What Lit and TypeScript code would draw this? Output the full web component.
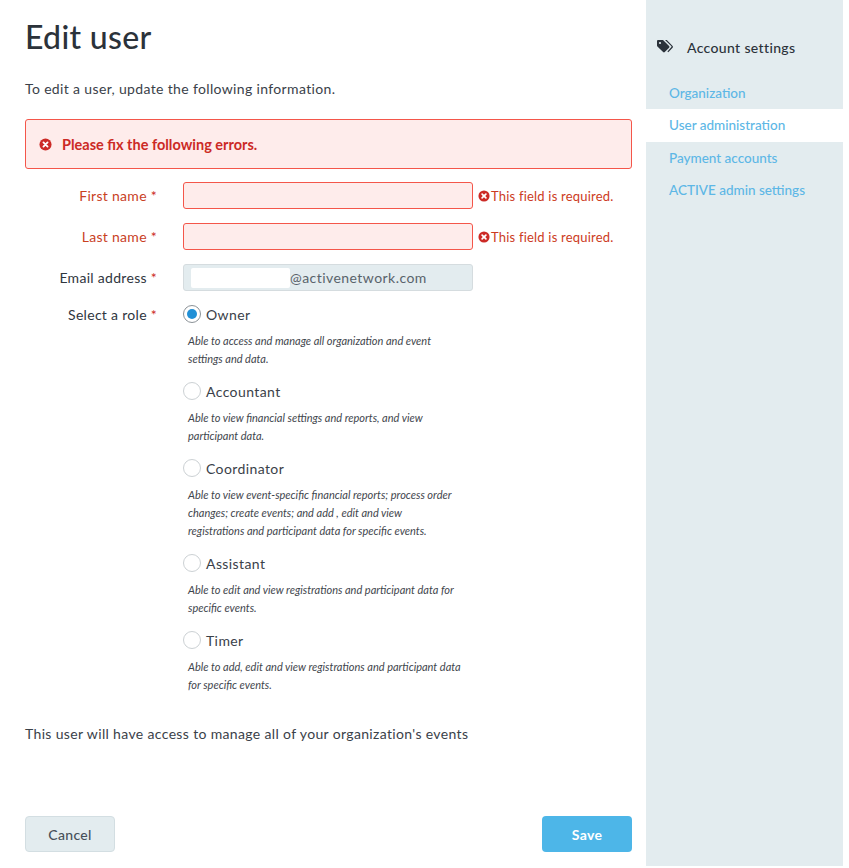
import { LitElement, html, css, svg } from "lit";
import { customElement } from "lit/decorators.js";

const errIcon = html`<svg class="err" viewBox="0 0 14 14"><circle cx="7" cy="7" r="6.5" fill="#cc2a26"/><path d="M4.8 4.8l4.4 4.4M9.2 4.8l-4.4 4.4" stroke="#fff" stroke-width="2" stroke-linecap="round"/></svg>`;

const roles = [
  { name: "Owner", checked: true, lines: ["Able to access and manage all organization and event", "settings and data."] },
  { name: "Accountant", lines: ["Able to view financial settings and reports, and view", "participant data."] },
  { name: "Coordinator", lines: ["Able to view event-specific financial reports; process order", "changes; create events; and add , edit and view", "registrations and participant data for specific events."] },
  { name: "Assistant", lines: ["Able to edit and view registrations and participant data for", "specific events."] },
  { name: "Timer", lines: ["Able to add, edit and view registrations and participant data", "for specific events."] },
];

@customElement("app-root")
export class AppRoot extends LitElement {
  static styles = css`
    :host { display: block; width: 849px; height: 868px; background: #fff; font-family: Lato, "Open Sans", sans-serif; color: #3a4149; font-size: 14px; }
    * { box-sizing: border-box; }
    .page { display: flex; height: 866px; width: 843px; }
    .main { width: 646px; padding: 0 14px 0 25px; display: flex; flex-direction: column; }
    h1 { margin: 17px 0 0; font-size: 32px; line-height: 40px; font-weight: 500; color: #2b323a; letter-spacing: 0.3px; }
    .intro { margin: 22px 0 0; line-height: 20px; letter-spacing: 0.35px; }
    .alert { margin-top: 20px; height: 50px; display: flex; align-items: center; gap: 10px; padding-left: 13px; background: #feeceb; border: 1px solid #f4564a; border-radius: 3px; color: #cc2a26; font-weight: 700; font-size: 14.5px; }
    .alert .err { width: 13px; height: 13px; }
    .row { display: flex; }
    .row.f { margin-top: 13px; height: 27px; align-items: center; }
    .row.f + .row.f { margin-top: 14px; }
    .lab { width: 132px; text-align: right; margin-right: 26px; letter-spacing: 0.3px; color: #2f363e; }
    .lab i { font-style: normal; color: #cc2a26; }
    .bad .lab { color: #c9411f; }
    .box { width: 290px; height: 27px; border: 1px solid #f4564a; border-radius: 3px; background: #feeceb; }
    .msg { display: flex; align-items: center; margin-left: 5px; gap: 1px; color: #cc3b22; font-size: 13px; letter-spacing: 0.2px; }
    .msg .err { width: 12px; height: 12px; }
    .box.email { background: #e3ecef; border-color: #d5dcdf; display: flex; align-items: center; color: #59636b; letter-spacing: 0.45px; padding-left: 7px; }
    .mask { width: 99px; height: 20px; background: #fff; border-radius: 2px; flex: none; }
    .rolerow { margin-top: 14px; }
    .rolerow .lab { line-height: 18px; padding-top: 1px; }
    .list { width: 290px; display: flex; flex-direction: column; }
    .opt { display: flex; align-items: center; height: 18px; gap: 5px; letter-spacing: 0.4px; }
    .radio { width: 18px; height: 18px; border-radius: 50%; border: 1px solid #ccd1d4; background: #fff; flex: none; display: flex; align-items: center; justify-content: center; }
    .radio.on { border-color: #8b9297; }
    .radio.on span { width: 10px; height: 10px; border-radius: 50%; background: #2190d6; }
    .desc { margin: 9px 0 14px 5px; font-size: 11px; line-height: 18px; font-style: italic; color: #3f464d; white-space: nowrap; }
    .note { margin: 16px 0 0; line-height: 20px; letter-spacing: 0.35px; }
    .actions { margin-top: auto; margin-bottom: 14px; display: flex; justify-content: space-between; }
    .btn { width: 90px; height: 36px; border-radius: 4px; display: flex; align-items: center; justify-content: center; font-size: 14px; font-weight: 500; letter-spacing: 0.3px; }
    .cancel { background: #e3ecef; border: 1px solid #d3dee2; color: #47505a; }
    .save { background: #4db6e8; color: #fff; font-weight: 700; }
    .side { width: 197px; background: #e3ecef; padding-top: 37px; }
    .head { display: flex; align-items: center; height: 20px; padding-left: 11px; gap: 14px; color: #2b323a; letter-spacing: 0.35px; font-weight: 500; }
    .head svg { width: 16px; height: 14px; }
    nav { margin-top: 20px; display: flex; flex-direction: column; }
    nav a { height: 32.3px; line-height: 32px; padding-left: 23px; color: #5db7e6; font-size: 13.5px; font-weight: 500; }
    nav a.cur { background: #fff; }
  `;

  render() {
    return html`<div class="page">
      <div class="main">
        <h1>Edit user</h1>
        <p class="intro">To edit a user, update the following information.</p>
        <div class="alert">${errIcon}<span>Please fix the following errors.</span></div>
        <div class="row f bad"><div class="lab">First name <i>*</i></div><div class="box"></div><div class="msg">${errIcon}<span>This field is required.</span></div></div>
        <div class="row f bad"><div class="lab">Last name <i>*</i></div><div class="box"></div><div class="msg">${errIcon}<span>This field is required.</span></div></div>
        <div class="row f"><div class="lab">Email address <i>*</i></div><div class="box email"><span class="mask"></span><span>@activenetwork.com</span></div></div>
        <div class="row rolerow"><div class="lab">Select a role <i>*</i></div>
          <div class="list">
            ${roles.map((r) => html`<div class="opt"><span class="radio ${r.checked ? "on" : ""}">${r.checked ? html`<span></span>` : ""}</span>${r.name}</div>
              <div class="desc">${r.lines.map((l) => html`<div>${l}</div>`)}</div>`)}
          </div>
        </div>
        <p class="note">This user will have access to manage all of your organization's events</p>
        <div class="actions"><div class="btn cancel">Cancel</div><div class="btn save">Save</div></div>
      </div>
      <aside class="side">
        <div class="head"><svg viewBox="0 0 16 14"><path d="M0 1.2C0 .5.5 0 1.2 0h4.3c.4 0 .8.2 1 .4l5.6 5.6c.5.5.5 1.2 0 1.7l-4.3 4.3c-.5.5-1.2.5-1.7 0L.4 6.4C.2 6.2 0 5.800 0 5.500z" fill="#2b323a"/><path d="M8 0h1.300c.4 0 .7.2 1 .4l5.300 5.600c.5.5.5 1.200 0 1.700l-4.300 4.600-.9-.9 4-4.500c.2-.2.200-.5 0-.7z" fill="#2b323a"/><circle cx="3" cy="3" r="1.100" fill="#e3ecef"/></svg>Account settings</div>
        <nav><a>Organization</a><a class="cur">User administration</a><a>Payment accounts</a><a>ACTIVE admin settings</a></nav>
      </aside>
    </div>`;
  }
}
